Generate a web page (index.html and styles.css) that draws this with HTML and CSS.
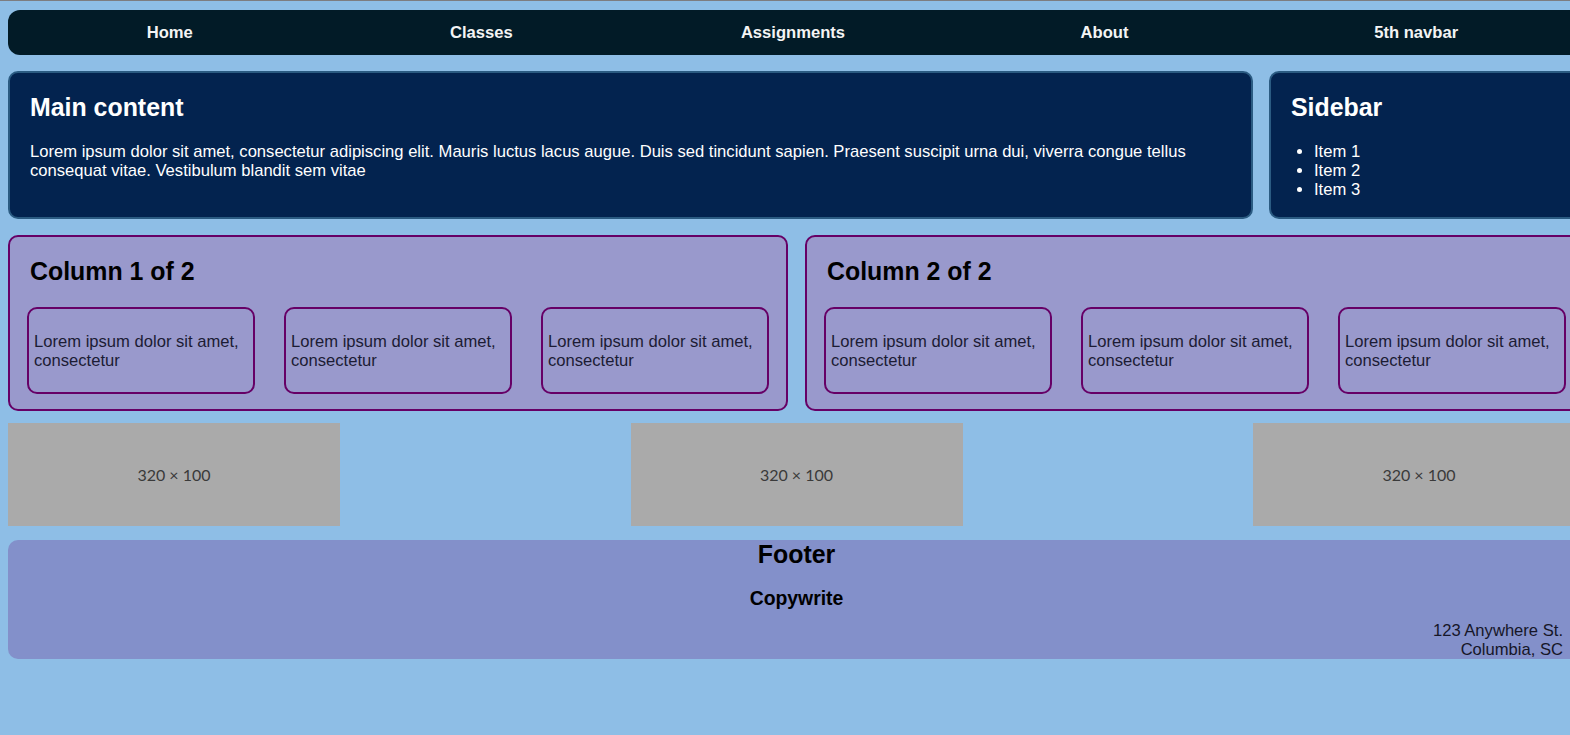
FILE: index.html
```html
<!DOCTYPE html>
<html lang="en">
<head>
<meta charset="utf-8">
<title>Layout</title>
<link rel="stylesheet" href="styles.css">
</head>
<body>
<div class="page">
  <nav class="navbar">
    <a class="nav-item" href="#">Home</a>
    <a class="nav-item" href="#">Classes</a>
    <a class="nav-item" href="#">Assignments</a>
    <a class="nav-item" href="#">About</a>
    <a class="nav-item" href="#">5th navbar</a>
  </nav>

  <div class="top-row">
    <section class="panel main">
      <h2>Main content</h2>
      <p>Lorem ipsum dolor sit amet, consectetur adipiscing elit. Mauris luctus lacus augue. Duis sed tincidunt sapien. Praesent suscipit urna dui, viverra congue tellus consequat vitae. Vestibulum blandit sem vitae</p>
    </section>
    <aside class="panel sidebar">
      <h2>Sidebar</h2>
      <ul>
        <li>Item 1</li>
        <li>Item 2</li>
        <li>Item 3</li>
      </ul>
    </aside>
  </div>

  <div class="columns">
    <section class="column">
      <h2>Column 1 of 2</h2>
      <div class="boxes">
        <div class="box"><p>Lorem ipsum dolor sit amet, consectetur</p></div>
        <div class="box"><p>Lorem ipsum dolor sit amet, consectetur</p></div>
        <div class="box"><p>Lorem ipsum dolor sit amet, consectetur</p></div>
      </div>
    </section>
    <section class="column">
      <h2>Column 2 of 2</h2>
      <div class="boxes">
        <div class="box"><p>Lorem ipsum dolor sit amet, consectetur</p></div>
        <div class="box"><p>Lorem ipsum dolor sit amet, consectetur</p></div>
        <div class="box"><p>Lorem ipsum dolor sit amet, consectetur</p></div>
      </div>
    </section>
  </div>

  <div class="images">
    <div class="placeholder">320 × 100</div>
    <div class="placeholder">320 × 100</div>
    <div class="placeholder">320 × 100</div>
  </div>

  <footer class="footer">
    <h2>Footer</h2>
    <h3>Copywrite</h3>
    <div class="address">123 Anywhere St.<br>Columbia, SC</div>
  </footer>
</div>
</body>
</html>
```

FILE: styles.css
```css
html {
  overflow: hidden;
  background: #8ebee6;
  border-top: 1px solid #7d7d80;
}

body {
  margin: 9px 0 0 8px;
  font-family: "Liberation Sans", Arial, sans-serif;
  font-size: 16.6px;
  line-height: 19px;
  color: #111;
}

.page {
  width: 1577px;
}

/* Navbar */
.navbar {
  display: grid;
  grid-template-columns: repeat(5, 311.6px);
  align-items: center;
  height: 45px;
  padding: 0 6px;
  background: #021b27;
  border-radius: 12px;
}

.nav-item {
  text-align: center;
  color: #f4f4f4;
  font-weight: bold;
  text-decoration: none;
}

/* Main + sidebar */
.top-row {
  display: grid;
  grid-template-columns: 1245px 1fr;
  gap: 16px;
  margin-top: 16px;
}

.panel {
  background: #03234f;
  border: 2px solid #2b5b82;
  border-radius: 10px;
  padding: 0 20px 1px;
  color: #fff;
}

.panel h2,
.column h2 {
  font-size: 24.9px;
  line-height: 28px;
  margin: 20px 0 21px;
}

.panel p {
  margin: 16.6px 0;
}

.sidebar ul {
  margin: 16.6px 0;
  padding-left: 23px;
}

/* Columns */
.columns {
  display: grid;
  grid-template-columns: 1fr 1fr;
  gap: 17px;
  margin-top: 16px;
}

.column {
  background: #9999cc;
  border: 2px solid #660066;
  border-radius: 10px;
  padding: 0 17px 15px;
  color: #000;
}

.column h2 {
  margin: 20px 3px 22px;
}

.boxes {
  display: grid;
  grid-template-columns: repeat(3, 1fr);
  gap: 29px;
}

.box {
  border: 2px solid #660066;
  border-radius: 10px;
  padding: 7px 5px 5px;
  color: #1c1c34;
}

.box p {
  margin: 16.6px 0;
}

/* Images */
.images {
  display: flex;
  justify-content: space-between;
  margin-top: 12px;
}

.placeholder {
  width: 332px;
  height: 103px;
  background: #aaaaaa;
  display: flex;
  align-items: center;
  justify-content: center;
  font-family: Lato, "Open Sans", sans-serif;
  font-size: 16px;
  color: #3a3a3a;
}

/* Footer */
.footer {
  margin-top: 14px;
  background: #8390ca;
  border-radius: 10px;
  padding: 0 22px;
  text-align: center;
  color: #000;
}

.footer h2 {
  font-size: 24.9px;
  line-height: 28px;
  margin: 0 0 19px;
}

.footer h3 {
  font-size: 19.4px;
  line-height: 22px;
  margin: 0 0 12px;
}

.address {
  text-align: right;
  color: #161628;
}
```
